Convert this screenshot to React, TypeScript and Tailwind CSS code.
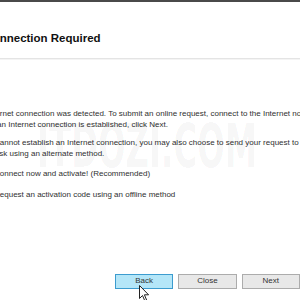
import { useState } from 'react';

const font = { fontFamily: '"Liberation Sans", Arial, sans-serif' };

function Radio({ checked }: { checked?: boolean }) {
  return (
    <span className="w-[10px] h-[10px] rounded-full border border-[#8a8a8a] bg-white flex items-center justify-center flex-shrink-0">
      {checked && <span className="w-[4px] h-[4px] rounded-full bg-[#222]" />}
    </span>
  );
}

export default function App() {
  const [choice, setChoice] = useState('online');

  return (
    <div className="relative w-[300px] h-[300px] overflow-hidden bg-white text-[#303030]" style={font}>
      {/* window frame edge */}
      <div className="h-[2px] bg-[#4a4a4a]" />

      <div className="ml-[-61px] flex flex-col">
        {/* HEADER */}
        <div className="h-[56px] pt-[29px]">
          <h1 className="text-[11.5px] leading-[14px] font-bold text-[#111] whitespace-nowrap">
            Internet Connection Required
          </h1>
        </div>
        <div className="ml-[61px] h-px bg-[#e4e4e4]" />
        <div className="ml-[61px] h-px bg-[#f4f4f4]" />

        {/* BODY */}
        <div className="pl-[35px] pt-[49px] text-[8px] leading-[10.5px] whitespace-nowrap">
          <p>No Internet connection was detected. To submit an online request, connect to the Internet now.</p>
          <p>When an Internet connection is established, click Next.</p>

          <p className="mt-[8px]">If you cannot establish an Internet connection, you may also choose to send your request to</p>
          <p>Autodesk using an alternate method.</p>

          <div className="mt-[10px] flex flex-col gap-[10.5px] pl-[6px]">
            <label className="flex items-center gap-[4px]" onClick={() => setChoice('online')}>
              <Radio checked={choice === 'online'} />
              <span>Connect now and activate! (Recommended)</span>
            </label>
            <label className="flex items-center gap-[4px]" onClick={() => setChoice('offline')}>
              <Radio checked={choice === 'offline'} />
              <span>Request an activation code using an offline method</span>
            </label>
          </div>
        </div>
      </div>

      {/* BUTTONS */}
      <div className="mt-[73px] pl-[115px] flex gap-[5px] text-[8px] text-[#333]">
        <button className="w-[59px] h-[15px] border border-[#3c9ccf] bg-[#b4e6f8] leading-none">Back</button>
        <button className="w-[59px] h-[15px] border border-[#acacac] bg-[#e8e8e8] leading-none">Close</button>
        <button className="w-[59px] h-[15px] border border-[#acacac] bg-[#e8e8e8] leading-none">Next</button>
      </div>

      {/* watermark */}
      <div
        className="absolute left-[37px] top-[116px] text-[60px] leading-none font-bold text-[#000]/[0.045] whitespace-nowrap pointer-events-none"
        style={{ fontFamily: '"Liberation Sans Narrow", "DejaVu Sans Condensed", "Liberation Sans", sans-serif', transform: 'scaleX(0.6)', transformOrigin: 'left' }}
      >
        ITDOZI.COM
      </div>

      {/* mouse cursor */}
      <svg className="absolute left-[139px] top-[285px]" width="11" height="17" viewBox="0 0 11 17">
        <path d="M0.5 0.5 L0.5 13.5 L3.5 10.5 L5.8 15.8 L7.6 15 L5.4 9.8 L9.6 9.8 Z" fill="white" stroke="#222" strokeWidth="1" strokeLinejoin="round" />
      </svg>
    </div>
  );
}
